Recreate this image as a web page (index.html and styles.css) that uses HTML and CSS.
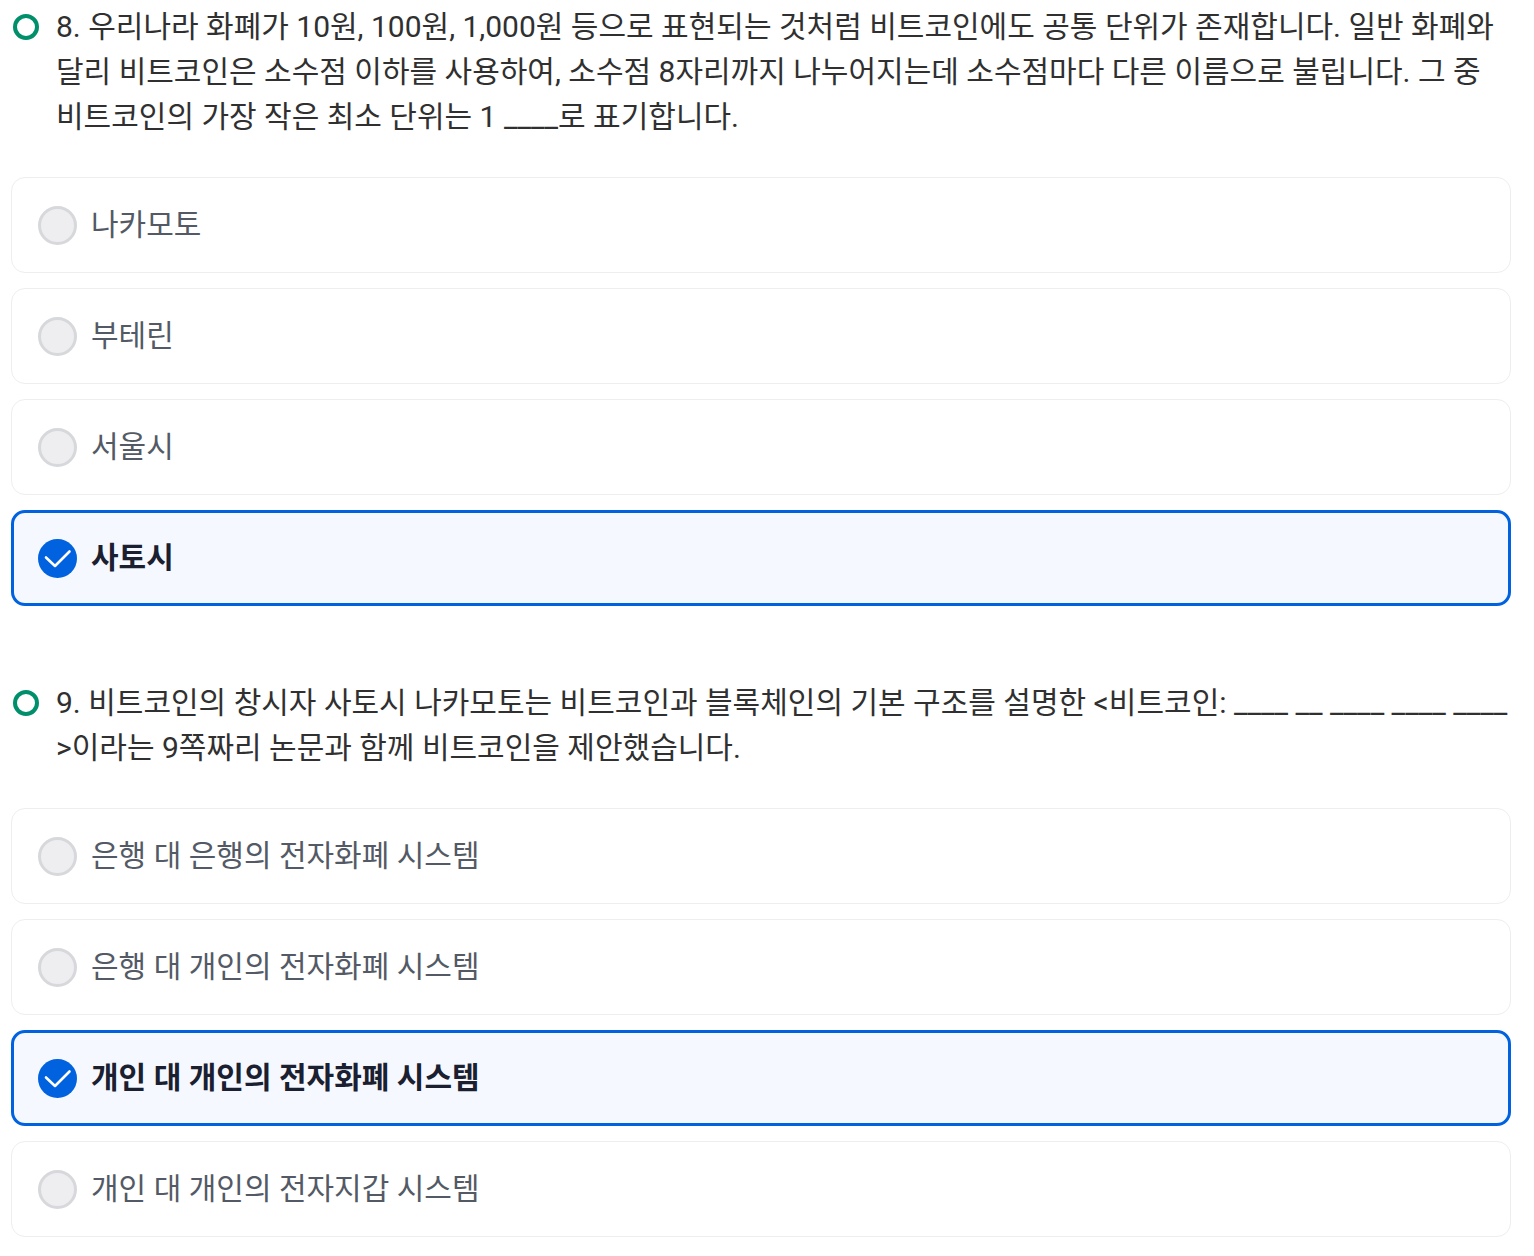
FILE: index.html
```html
<!DOCTYPE html>
<html lang="ko">
<head>
  <meta charset="UTF-8" />
  <meta name="viewport" content="width=device-width, initial-scale=1.0" />
  <title>비트코인 퀴즈</title>
  <link rel="stylesheet" href="styles.css">
</head>
<body>
  <form class="quiz">
    <fieldset class="question">
      <legend class="question-title">
        <span class="mark"></span>
        <span class="question-text">8. 우리나라 화폐가 10원, 100원, 1,000원 등으로 표현되는 것처럼 비트코인에도 공통 단위가 존재합니다. 일반 화폐와 달리 비트코인은 소수점 이하를 사용하여, 소수점 8자리까지 나누어지는데 소수점마다 다른 이름으로 불립니다. 그 중 비트코인의 가장 작은 최소 단위는 1 ____로 표기합니다.</span>
      </legend>
      <div class="options">
        <label class="option"><input type="radio" name="q8"><span class="option-text">나카모토</span></label>
        <label class="option"><input type="radio" name="q8"><span class="option-text">부테린</span></label>
        <label class="option"><input type="radio" name="q8"><span class="option-text">서울시</span></label>
        <label class="option"><input type="radio" name="q8" checked><span class="option-text">사토시</span></label>
      </div>
    </fieldset>

    <fieldset class="question">
      <legend class="question-title">
        <span class="mark"></span>
        <span class="question-text">9. 비트코인의 창시자 사토시 나카모토는 비트코인과 블록체인의 기본 구조를 설명한 &lt;비트코인: ____ __ ____ ____ ____ &gt;이라는 9쪽짜리 논문과 함께 비트코인을 제안했습니다.</span>
      </legend>
      <div class="options">
        <label class="option"><input type="radio" name="q9"><span class="option-text">은행 대 은행의 전자화폐 시스템</span></label>
        <label class="option"><input type="radio" name="q9"><span class="option-text">은행 대 개인의 전자화폐 시스템</span></label>
        <label class="option"><input type="radio" name="q9" checked><span class="option-text">개인 대 개인의 전자화폐 시스템</span></label>
        <label class="option"><input type="radio" name="q9"><span class="option-text">개인 대 개인의 전자지갑 시스템</span></label>
      </div>
    </fieldset>
  </form>
</body>
</html>
```
FILE: styles.css
```css
* {
  box-sizing: border-box;
  margin: 0;
  padding: 0;
}

body {
  background-color: #fff;
  color: #303030;
  font-family: Roboto, "Noto Sans CJK KR", sans-serif;
  font-size: 30px;
  line-height: 45px;
}

.quiz {
  display: flex;
  flex-direction: column;
  gap: 74px;
  padding: 4px 23px 20px 11px;
}

.question {
  min-width: 0;
  border: none;
}

.question-title {
  display: flex;
  width: 100%;
  gap: 17px;
}

.mark {
  flex: none;
  width: 26px;
  height: 26px;
  margin: 10px 0 0 2px;
  border: 4px solid #008f6b;
  border-radius: 50%;
}

.question-text {
  flex: 1;
}

.options {
  display: flex;
  flex-direction: column;
  gap: 15px;
  margin-top: 38px;
}

.option {
  display: flex;
  align-items: center;
  gap: 14px;
  min-height: 96px;
  padding: 0 26px;
  border: 1px solid #eeeeee;
  border-radius: 14px;
  color: #535a65;
  cursor: pointer;
}

.option-text {
  padding-bottom: 2px;
}

.option input {
  appearance: none;
  flex: none;
  width: 39px;
  height: 39px;
  border: 3px solid #d7d8db;
  border-radius: 50%;
  background-color: #eeeef0;
  cursor: pointer;
}

.option:has(input:checked) {
  padding: 0 24px;
  border: 3px solid #0062df;
  background-color: #f5f8ff;
  color: #1a2030;
  font-weight: bold;
}

.option input:checked {
  border: none;
  background: #0062df url("data:image/svg+xml,%3Csvg xmlns='http://www.w3.org/2000/svg' viewBox='0 0 39 39' fill='none' stroke='white' stroke-width='2.6' stroke-linecap='round' stroke-linejoin='round'%3E%3Cpath d='M8 18.5l9 8.5 14.5-14.5'/%3E%3C/svg%3E") center / 39px no-repeat;
}
```
